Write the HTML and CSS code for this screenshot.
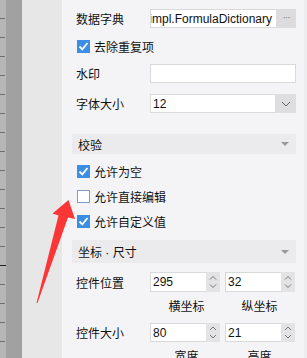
FILE: index.html
```html
<!DOCTYPE html>
<html lang="zh">
<head>
  <meta charset="UTF-8" />
  <title>属性面板</title>
  <link rel="stylesheet" href="styles.css">
</head>
<body>
  <div class="app">
    <div class="ruler"></div>
    <div class="rail"></div>
    <div class="gutter"></div>

    <div class="panel">
      <div class="row row-dict">
        <span class="label">数据字典</span>
        <div class="field">
          <div class="clip"><span>impl.FormulaDictionary</span></div>
          <span class="btn-more">···</span>
        </div>
      </div>

      <div class="row row-check">
        <span class="check on"></span>
        <span>去除重复项</span>
      </div>

      <div class="row row-mark">
        <span class="label">水印</span>
        <div class="field"></div>
      </div>

      <div class="row row-size">
        <span class="label">字体大小</span>
        <div class="field">
          <div class="clip start"><span>12</span></div>
          <span class="btn-drop">
            <svg width="10" height="6" viewBox="0 0 10 6"><path d="M1 1 L5 5 L9 1" fill="none" stroke="#666" stroke-width="1"/></svg>
          </span>
        </div>
      </div>

      <div class="section sec-check">
        <span>校验</span>
        <span class="tri"></span>
      </div>

      <div class="check-list">
        <div class="check-row"><span class="check on"></span><span>允许为空</span></div>
        <div class="check-row"><span class="check"></span><span>允许直接编辑</span></div>
        <div class="check-row"><span class="check on"></span><span>允许自定义值</span></div>
      </div>

      <div class="section sec-pos">
        <span>坐标 · 尺寸</span>
        <span class="tri"></span>
      </div>

      <div class="row pair-row first">
        <span class="label">控件位置</span>
        <div class="spin"><span class="num">295</span><span class="arrows"></span></div>
        <div class="spin"><span class="num">32</span><span class="arrows"></span></div>
      </div>
      <div class="caps">
        <span>横坐标</span>
        <span>纵坐标</span>
      </div>

      <div class="row pair-row">
        <span class="label">控件大小</span>
        <div class="spin"><span class="num">80</span><span class="arrows"></span></div>
        <div class="spin"><span class="num">21</span><span class="arrows"></span></div>
      </div>
      <div class="caps">
        <span>宽度</span>
        <span>高度</span>
      </div>
    </div>

    <div class="edge"></div>

    <!-- callout arrow drawn over the screenshot -->
    <svg class="arrow" width="307" height="358" viewBox="0 0 307 358">
      <polygon points="68.5,200 75,219 68,217.5 37.5,303 36.5,303 58.5,215.5 52.5,213.5" fill="#fb3636"/>
    </svg>
  </div>
</body>
</html>
```

FILE: styles.css
```css
body {
  margin: 0;
  font-family: "Liberation Sans", "Noto Sans CJK SC", sans-serif;
  font-size: 12px;
  color: #111;
  overflow: hidden;
}

.app {
  position: relative;
  display: flex;
  width: 307px;
  height: 358px;
  overflow: hidden;
}

.ruler {
  width: 6px;
  flex-shrink: 0;
  background-color: #b6b6b6;
  background-image:
    linear-gradient(#222, #222),
    linear-gradient(to bottom, transparent 18px, #707070 18px);
  background-size: 6px 1px, 5px 19px;
  background-position: 0 265px, 0 0;
  background-repeat: no-repeat, repeat-y;
}

.rail {
  width: 16px;
  flex-shrink: 0;
  background-color: #a1a1a1;
}

.gutter {
  width: 40px;
  flex-shrink: 0;
  background-color: #e7e7e7;
}

.panel {
  flex: 1;
  min-width: 0;
  background-color: #f4f4f6;
  padding: 5px 8px 0 14px;
}

.edge {
  width: 3px;
  flex-shrink: 0;
  background-color: #ededef;
}

.row {
  display: flex;
  align-items: center;
}

.row-dict { height: 27px; }
.row-check { height: 28px; }
.row-mark { height: 27px; }
.row-size { height: 33px; }

.label {
  width: 74px;
  flex-shrink: 0;
}

.field {
  flex: 1;
  min-width: 0;
  height: 19px;
  box-sizing: border-box;
  border: 1px solid #d9d9d9;
  background: #fff;
  display: flex;
}

.clip {
  flex: 1;
  min-width: 0;
  overflow: hidden;
  display: flex;
  justify-content: flex-end;
  align-items: center;
  padding-right: 4px;
  white-space: nowrap;
}

.clip span {
  flex-shrink: 0;
}

.clip.start {
  justify-content: flex-start;
  padding-left: 2px;
}

.btn-more {
  width: 20px;
  flex-shrink: 0;
  margin: -1px -1px -1px 0;
  background: #dcdcde;
  color: #777;
  font-size: 10px;
  text-align: center;
  line-height: 18px;
  letter-spacing: -1px;
}

.btn-drop {
  width: 21px;
  flex-shrink: 0;
  margin: -1px -1px -1px 0;
  background: #dedee0;
  display: flex;
  align-items: center;
  justify-content: center;
}

.check {
  width: 13px;
  height: 13px;
  box-sizing: border-box;
  border: 1px solid #7e9cc4;
  background: #fff;
  margin-right: 4px;
  margin-left: 1px;
  flex-shrink: 0;
}

.check.on {
  border: none;
  background: #3a8ee6 url("data:image/svg+xml;utf8,<svg xmlns='http://www.w3.org/2000/svg' width='13' height='13'><path d='M2.5 6.5 L5.3 9.3 L10.5 3' fill='none' stroke='white' stroke-width='1.8'/></svg>");
}

.section {
  margin-left: -4px;
  background: #ebebed;
  display: flex;
  align-items: center;
  justify-content: space-between;
  padding: 0 7px 0 6px;
}

.sec-check {
  margin-top: 14px;
  height: 20px;
}

.sec-pos {
  margin-top: 6px;
  height: 23px;
}

.tri {
  width: 0;
  height: 0;
  border-left: 4px solid transparent;
  border-right: 4px solid transparent;
  border-top: 4px solid #9a9a9c;
}

.check-list {
  margin-top: 5px;
}

.check-row {
  height: 25px;
  display: flex;
  align-items: center;
}

.pair-row {
  margin-top: 1px;
  height: 19px;
}

.pair-row.first {
  margin-top: 9px;
  height: 20px;
}

.spin {
  width: 70px;
  flex-shrink: 0;
  height: 100%;
  box-sizing: border-box;
  border: 1px solid #d9d9d9;
  background: #fff;
  display: flex;
  margin-right: 5px;
}

.spin .num {
  flex: 1;
  padding-left: 2px;
  display: flex;
  align-items: center;
}

.arrows {
  width: 14px;
  margin: -1px -1px -1px 0;
  background: #e3e3e5 url("data:image/svg+xml;utf8,<svg xmlns='http://www.w3.org/2000/svg' width='14' height='20'><path d='M4 7.5 L7 4.5 L10 7.5 M4 12.5 L7 15.5 L10 12.5' fill='none' stroke='%23777' stroke-width='1'/></svg>") no-repeat center;
}

.caps {
  display: flex;
  padding-left: 74px;
  height: 30px;
  line-height: 30px;
}

.caps span {
  width: 75px;
  text-align: center;
}

.arrow {
  position: absolute;
  left: 0;
  top: 0;
  pointer-events: none;
}
```
